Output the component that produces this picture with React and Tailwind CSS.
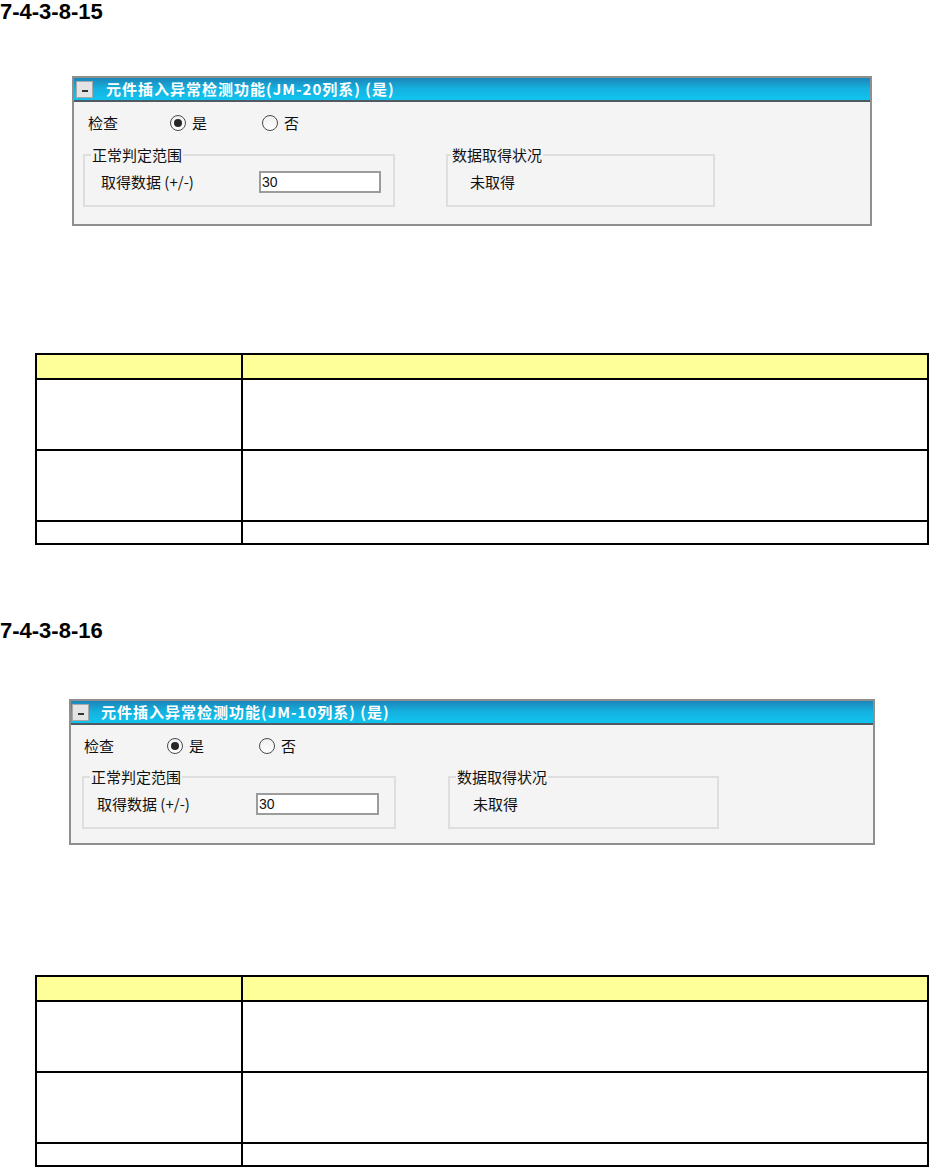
import React from 'react';

const cjk = "font-['Noto_Sans_CJK_SC','Noto_Sans_CJK_JP',sans-serif]";

const panels = [
  {
    title: '元件插入异常检测功能(JM-20列系) (是)',
    box: 'ml-[72px] w-[800px] h-[150px]',
    minus: 'ml-[2px]',
    titleGap: 'ml-[13px]',
    row: 'pl-[14px]',
    body: 'pb-[16px]',
    label: 'w-[82px]',
    groupsGap: 'mt-[16px]',
    g1: 'ml-[9px] w-[312px]',
    g1Legend: 'ml-[6px]',
    g1Label: 'ml-[16px] w-[158px]',
    input: 'w-[122px]',
    g2: 'ml-[51px] w-[269px]',
    g2Legend: 'ml-[3px]',
    g2Text: 'pl-[22px]',
  },
  {
    title: '元件插入异常检测功能(JM-10列系) (是)',
    box: 'ml-[69px] w-[806px] h-[146px]',
    minus: 'ml-[1px]',
    titleGap: 'ml-[12px]',
    row: 'pl-[13px]',
    body: 'pb-[11px]',
    label: 'w-[83px]',
    groupsGap: 'mt-[15px]',
    g1: 'ml-[11px] w-[314px]',
    g1Legend: 'ml-[6px]',
    g1Label: 'ml-[13px] w-[159px]',
    input: 'w-[123px]',
    g2: 'ml-[52px] w-[271px]',
    g2Legend: 'ml-[6px]',
    g2Text: 'pl-[23px]',
  },
];

function Radio({ checked, label }) {
  return (
    <div className="flex items-center gap-[6px] w-[92px]">
      <span className="w-[16px] h-[16px] rounded-full border border-[#4a4a4a] bg-linear-to-b from-[#f0f0f0] to-white flex items-center justify-center">
        {checked && <span className="w-[8px] h-[8px] rounded-full bg-[#262626]" />}
      </span>
      <span>{label}</span>
    </div>
  );
}

function Panel({ p }) {
  return (
    <div className={`${p.box} flex flex-col border-2 border-[#8f8f8f] bg-[#f4f4f4] text-[15px] text-[#111] ${cjk}`}>
      <div className="h-[24px] shrink-0 flex items-center border-b-2 border-[#505a62] bg-linear-to-b from-[#1a86b8] via-[#14b2e0] to-[#10c4ef]">
        <div className={`${p.minus} w-[17px] h-[17px] bg-[#e4e4e4] border border-[#a8a8a8] flex items-center justify-center`}>
          <span className="w-[6px] h-[2px] bg-[#333] mt-[3px]" />
        </div>
        <span className={`${p.titleGap} text-white font-bold text-[15px] tracking-[1px] leading-[20px]`}>{p.title}</span>
      </div>
      <div className={`flex-1 flex flex-col pt-[13px] ${p.body}`}>
        <div className={`flex items-center h-[16px] leading-[16px] ${p.row}`}>
          <span className={p.label}>检查</span>
          <Radio checked label="是" />
          <Radio label="否" />
        </div>
        <div className={`flex ${p.groupsGap}`}>
          <fieldset className={`${p.g1} border-2 border-[#dedede] pb-[12px]`}>
            <legend className={`${p.g1Legend} px-[1px] leading-[16px]`}>正常判定范围</legend>
            <div className="flex items-center h-[22px] mt-[8px]">
              <span className={p.g1Label}>取得数据 (+/-)</span>
              <div className={`${p.input} h-[22px] bg-white border-2 border-[#9c9c9c] flex items-center pl-[1px] text-[14px] font-['Liberation_Sans',sans-serif]`}>
                30
              </div>
            </div>
          </fieldset>
          <fieldset className={`${p.g2} border-2 border-[#dedede] pb-[12px]`}>
            <legend className={`${p.g2Legend} px-[1px] leading-[16px]`}>数据取得状况</legend>
            <div className={`flex items-center h-[22px] mt-[8px] ${p.g2Text}`}>未取得</div>
          </fieldset>
        </div>
      </div>
    </div>
  );
}

function Table({ className }) {
  return (
    <div className={`${className} shrink-0 ml-[35px] w-[894px] border-2 border-black flex flex-col`}>
      <div className="flex shrink-0 h-[25px] bg-[#ffff99] border-b-2 border-black">
        <div className="w-[204px]" />
        <div className="flex-1 border-l-2 border-black" />
      </div>
      <div className="flex shrink-0 h-[71px] border-b-2 border-black">
        <div className="w-[204px]" />
        <div className="flex-1 border-l-2 border-black" />
      </div>
      <div className="flex shrink-0 h-[71px] border-b-2 border-black">
        <div className="w-[204px]" />
        <div className="flex-1 border-l-2 border-black" />
      </div>
      <div className="flex shrink-0 h-[21px]">
        <div className="w-[204px]" />
        <div className="flex-1 border-l-2 border-black" />
      </div>
    </div>
  );
}

export default function App() {
  return (
    <div className="w-[929px] h-[1167px] bg-white flex flex-col overflow-hidden">
      <h2 className="shrink-0 h-[24px] leading-[24px] text-[22px] font-bold text-black font-['Liberation_Sans',Arial,sans-serif]">
        7-4-3-8-15
      </h2>
      <div className="shrink-0 mt-[52px]">
        <Panel p={panels[0]} />
      </div>
      <Table className="mt-[127px]" />
      <h2 className="shrink-0 mt-[74px] h-[24px] leading-[24px] text-[22px] font-bold text-black font-['Liberation_Sans',Arial,sans-serif]">
        7-4-3-8-16
      </h2>
      <div className="shrink-0 mt-[56px]">
        <Panel p={panels[1]} />
      </div>
      <Table className="mt-[130px]" />
    </div>
  );
}
